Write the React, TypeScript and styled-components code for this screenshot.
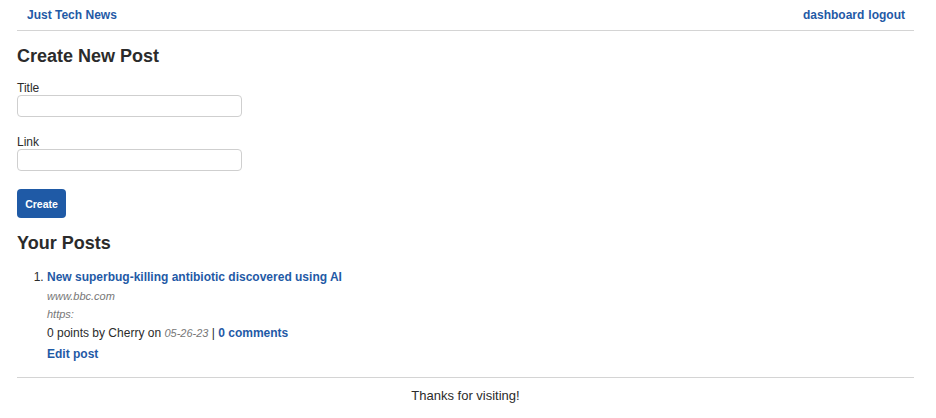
import React from "react";
import styled, { createGlobalStyle } from "styled-components";

const Global = createGlobalStyle`
  html, body { margin: 0; padding: 0; background: #fff; }
  body { font-family: "Liberation Sans", Arial, Helvetica, sans-serif; color: #333; }
  * { box-sizing: border-box; }
`;

const BLUE = "#1f5aa6";

const Page = styled.div`
  padding: 0 22px 0 17px;
`;

const Header = styled.header`
  height: 31px;
  display: flex;
  align-items: center;
  justify-content: space-between;
  padding: 0 9px 1px 10px;
  border-bottom: 1px solid #d4d4d4;
`;

const NavLink = styled.a`
  color: ${BLUE};
  font-weight: bold;
  font-size: 12px;
  text-decoration: none;
`;

const Nav = styled.nav`
  display: flex;
  gap: 4px;
`;

const Main = styled.main`
  display: flex;
  flex-direction: column;
  align-items: flex-start;
`;

const Heading = styled.h2<{ $top: number }>`
  margin: ${(p) => p.$top}px 0 0;
  font-size: 18px;
  line-height: 22px;
  font-weight: bold;
  color: #2b2b2b;
`;

const Form = styled.form`
  display: flex;
  flex-direction: column;
  align-items: flex-start;
`;

const Field = styled.div<{ $top: number }>`
  display: flex;
  flex-direction: column;
  margin-top: ${(p) => p.$top}px;
`;

const Label = styled.label`
  font-size: 12px;
  line-height: 14px;
  color: #2b2b2b;
`;

const Input = styled.input`
  width: 225px;
  height: 22px;
  border: 1px solid #cfcfcf;
  border-radius: 4px;
  background: #fff;
  font: inherit;
`;

const Button = styled.button`
  margin-top: 18px;
  width: 49px;
  height: 29px;
  border: none;
  border-radius: 4px;
  background: ${BLUE};
  color: #fff;
  font-family: inherit;
  font-weight: bold;
  font-size: 10.5px;
  padding: 0;
`;

const List = styled.ol`
  margin: 15px 0 0;
  padding-left: 30px;
  font-size: 12px;
  color: #2b2b2b;
`;

const Item = styled.li`
  line-height: 16px;
`;

const TitleLink = styled.a`
  color: ${BLUE};
  font-weight: bold;
  text-decoration: none;
`;

const Meta = styled.div<{ $top: number }>`
  margin-top: ${(p) => p.$top}px;
  font-size: 11px;
  line-height: 14px;
  font-style: italic;
  color: #777;
`;

const Byline = styled.div`
  margin-top: 4px;
  line-height: 16px;
`;

const DateText = styled.span`
  font-style: italic;
  color: #777;
  font-size: 11px;
`;

const EditLink = styled.a`
  display: block;
  margin-top: 5px;
  color: ${BLUE};
  font-weight: bold;
  text-decoration: none;
`;

const Footer = styled.footer`
  margin-top: 15px;
  border-top: 1px solid #d4d4d4;
  padding-top: 10px;
  text-align: center;
  font-size: 13px;
  line-height: 16px;
  color: #2b2b2b;
`;

export default function App() {
  return (
    <>
      <Global />
      <Page>
        <Header>
          <NavLink href="#">Just Tech News</NavLink>
          <Nav>
            <NavLink href="#">dashboard</NavLink>
            <NavLink href="#">logout</NavLink>
          </Nav>
        </Header>
        <Main>
          <Heading $top={14}>Create New Post</Heading>
          <Form onSubmit={(e) => e.preventDefault()}>
            <Field $top={14}>
              <Label htmlFor="title">Title</Label>
              <Input id="title" type="text" />
            </Field>
            <Field $top={18}>
              <Label htmlFor="link">Link</Label>
              <Input id="link" type="text" />
            </Field>
            <Button type="submit">Create</Button>
          </Form>
          <Heading $top={14}>Your Posts</Heading>
          <List>
            <Item>
              <TitleLink href="#">New superbug-killing antibiotic discovered using AI</TitleLink>
              <Meta $top={4}>www.bbc.com</Meta>
              <Meta $top={4}>https:</Meta>
              <Byline>
                0 points by Cherry on <DateText>05-26-23</DateText> | <TitleLink href="#">0 comments</TitleLink>
              </Byline>
              <EditLink href="#">Edit post</EditLink>
            </Item>
          </List>
        </Main>
        <Footer>Thanks for visiting!</Footer>
      </Page>
    </>
  );
}
